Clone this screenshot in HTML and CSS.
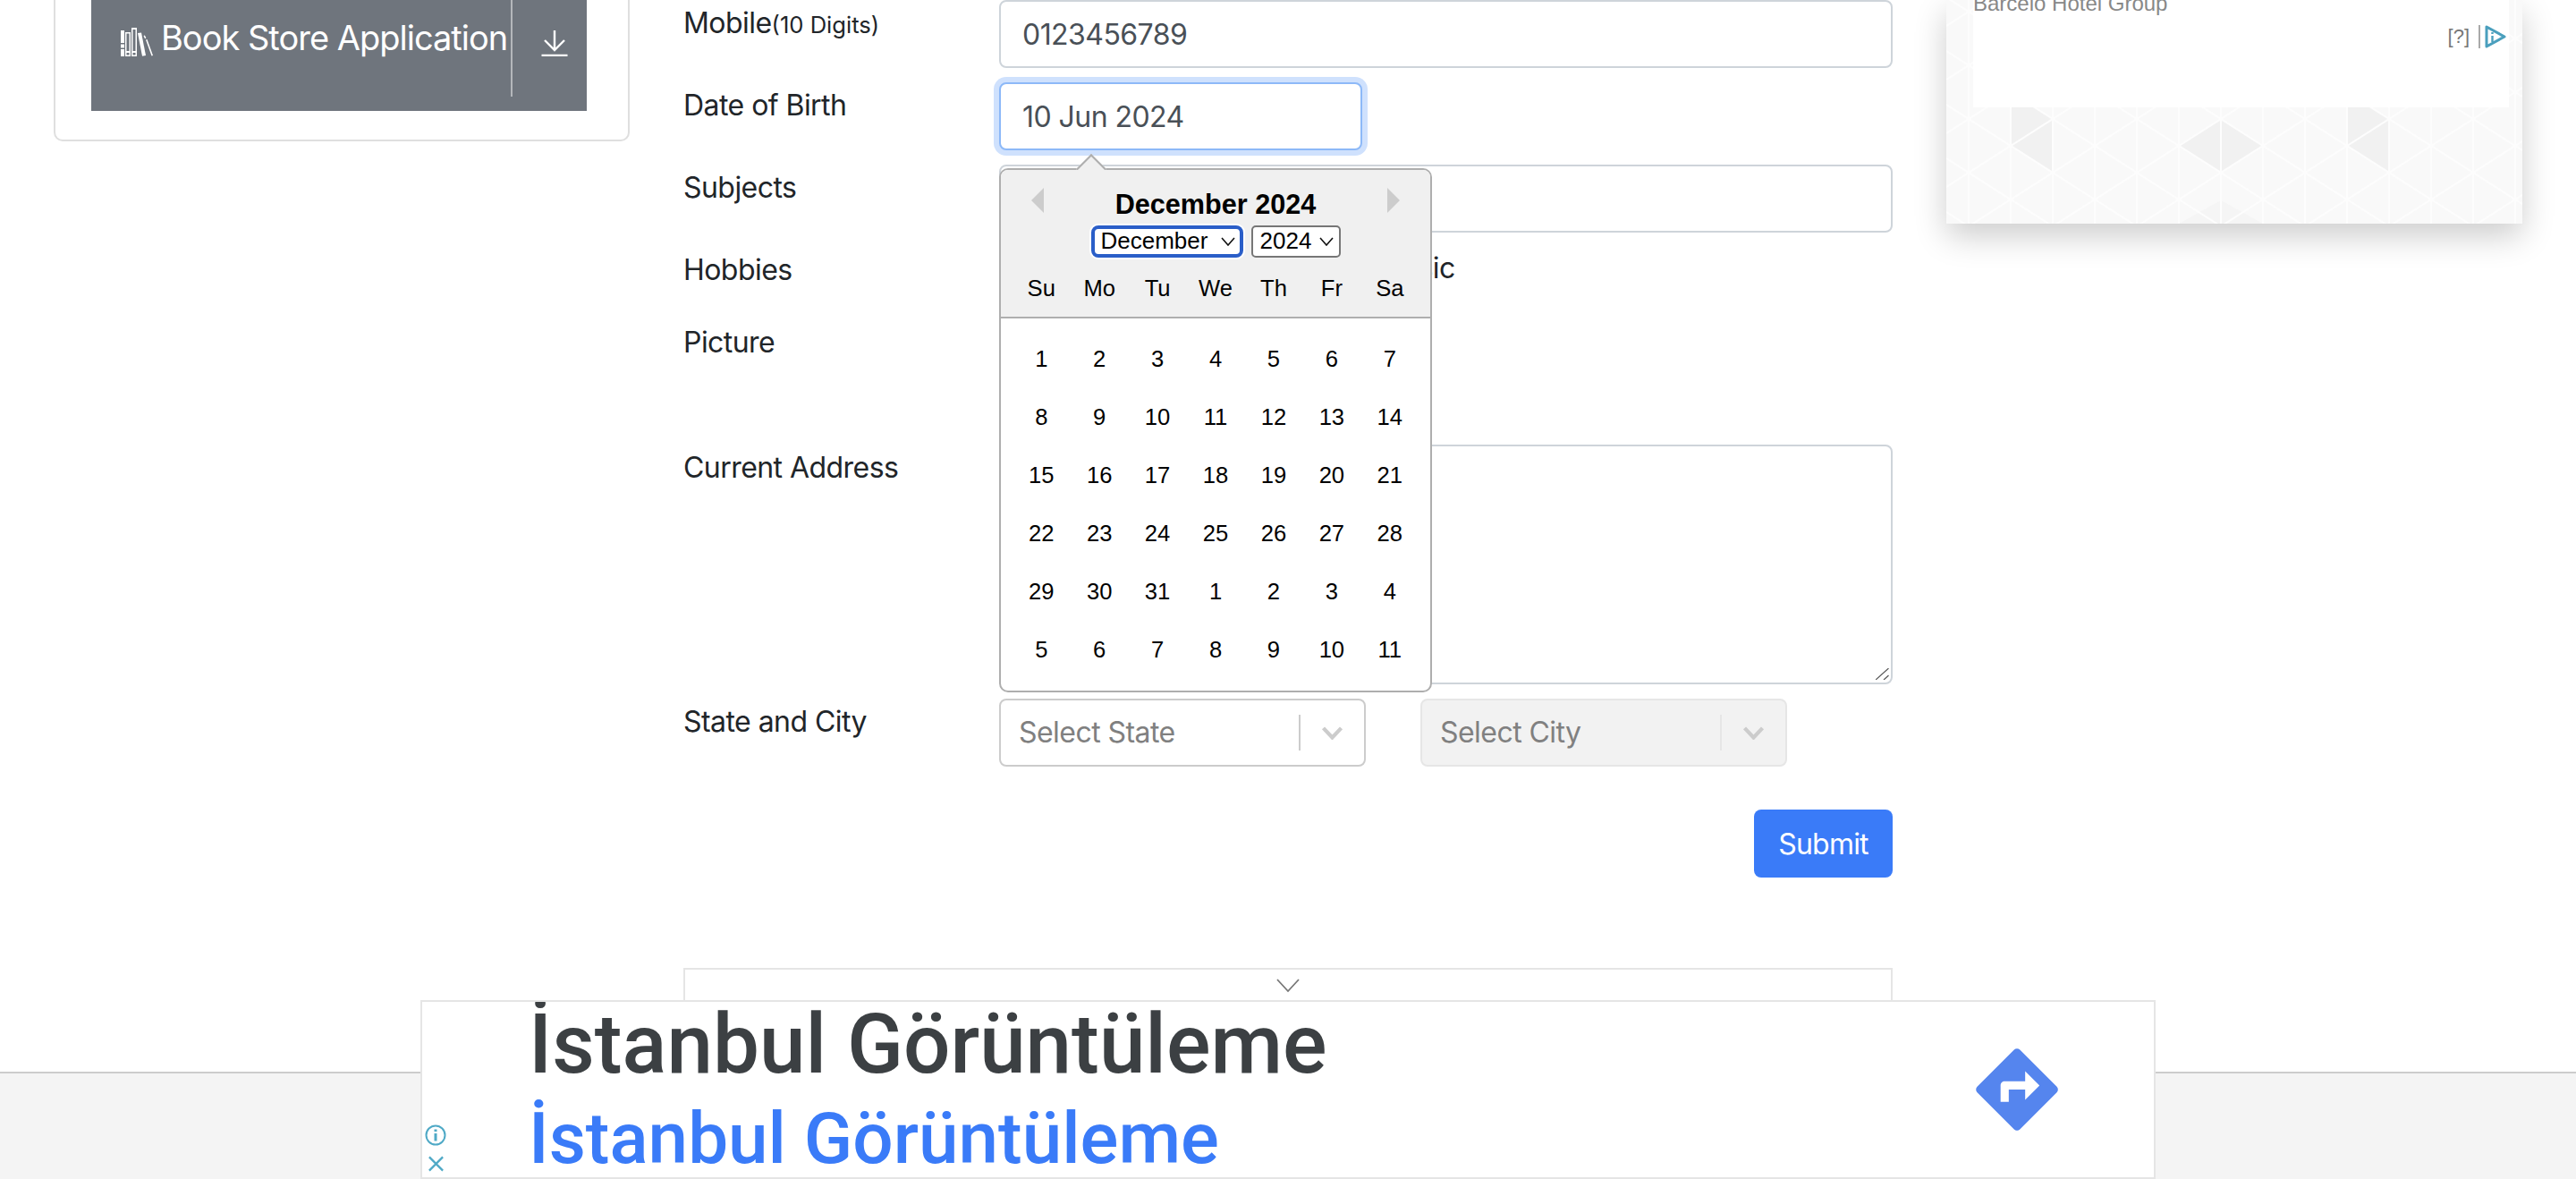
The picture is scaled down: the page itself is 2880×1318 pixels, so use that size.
FILE: index.html
```html
<!DOCTYPE html>
<html lang="en">
  <head>
    <title>Practice Form</title>

    <link rel="stylesheet" href="styles.css">
  </head>

  <body>
    <div class="page">
      <div class="left-col">
        <div class="left-card">
          <div class="app-item">
            <svg class="book-icon" viewBox="0 0 36 32" fill="#fff">
              <path d="M0 3h4v14H0zM0 18.500h4v4H0zM0 24h4v8H0z"/>
              <path d="M5 5h6v27H5zM6.500 6.500V26h3V6.500zM6.500 28v2.500h3V28z" fill-rule="evenodd"/>
              <path d="M12 0h6v32h-6zM13.500 2v24h3V2zM13.500 28v2.500h3V28z" fill-rule="evenodd"/>
              <path d="M19 6l4-.6 5 25.600-4 .8z"/>
              <path d="M25.500 9l1.400-.6 1.500 3.200-1.400.6zM28 13.500l1.500-.6 6.500 18-1.500.6z"/>
            </svg>
            <span class="app-name">Book Store Application</span>
            <div class="app-arrow">
              <svg viewBox="0 0 30 30" fill="none" stroke="#fff" stroke-width="2.400">
                <path d="M15 1v21M4 12l11 11 11-11M0.500 29h29"/>
              </svg>
            </div>
          </div>
        </div>
      </div>

      <form class="form">
        <div class="row">
          <label>Mobile<small>(10 Digits)</small></label>
          <input class="field" type="text" value="0123456789">
        </div>
        <div class="row">
          <label>Date of Birth</label>
          <div class="date-wrap">
            <input class="field field-focus" type="text" value="10 Jun 2024">
            <div class="picker">
              <div class="picker-tip"></div>
              <div class="picker-head">
                <span class="nav nav-prev"></span>
                <span class="nav nav-next"></span>
                <div class="picker-title">December 2024</div>
                <div class="picker-selects">
                  <span class="mini-select mini-month">December
                    <svg viewBox="0 0 16 10" fill="none" stroke="#111" stroke-width="1.600"><path d="M1 1l7 8 7-8"/></svg>
                  </span>
                  <span class="mini-select mini-year">2024
                    <svg viewBox="0 0 16 10" fill="none" stroke="#111" stroke-width="1.600"><path d="M1 1l7 8 7-8"/></svg>
                  </span>
                </div>
                <div class="week day-names">
                  <span>Su</span><span>Mo</span><span>Tu</span><span>We</span><span>Th</span><span>Fr</span><span>Sa</span>
                </div>
              </div>
              <div class="month">
                <div class="week"><span>1</span><span>2</span><span>3</span><span>4</span><span>5</span><span>6</span><span>7</span></div>
                <div class="week"><span>8</span><span>9</span><span>10</span><span>11</span><span>12</span><span>13</span><span>14</span></div>
                <div class="week"><span>15</span><span>16</span><span>17</span><span>18</span><span>19</span><span>20</span><span>21</span></div>
                <div class="week"><span>22</span><span>23</span><span>24</span><span>25</span><span>26</span><span>27</span><span>28</span></div>
                <div class="week"><span>29</span><span>30</span><span>31</span><span>1</span><span>2</span><span>3</span><span>4</span></div>
                <div class="week"><span>5</span><span>6</span><span>7</span><span>8</span><span>9</span><span>10</span><span>11</span></div>
              </div>
            </div>
          </div>
        </div>
        <div class="row">
          <label>Subjects</label>
          <input class="field" type="text">
        </div>
        <div class="row row-hobbies">
          <label>Hobbies</label>
          <div class="hobbies"><span>Sports</span><span>Reading</span><span>Music</span></div>
        </div>
        <div class="row row-picture">
          <label>Picture</label>
          <div></div>
        </div>
        <div class="row">
          <label>Current Address</label>
          <div class="address-wrap">
            <textarea class="field address"></textarea>
            <svg class="grip" viewBox="0 0 15 13" fill="none" stroke="#555" stroke-width="1.200"><path d="M0 13L14.500 0M9 13l5.500-5"/></svg>
          </div>
        </div>
        <div class="row row-state">
          <label>State and City</label>
          <div class="selects">
            <div class="select">
              <span class="select-text">Select State</span>
              <span class="select-sep"></span>
              <svg class="select-arrow" viewBox="0 0 20 12" fill="none" stroke="#ccc" stroke-width="3.400"><path d="M2 1.500l8 8.500 8-8.500"/></svg>
            </div>
            <div class="select select-off">
              <span class="select-text">Select City</span>
              <span class="select-sep"></span>
              <svg class="select-arrow" viewBox="0 0 20 12" fill="none" stroke="#ccc" stroke-width="3.400"><path d="M2 1.500l8 8.500 8-8.500"/></svg>
            </div>
          </div>
        </div>
        <div class="submit-row">
          <button class="submit" type="button">Submit</button>
        </div>
        <div class="accordion">
          <svg viewBox="0 0 26 16" fill="none" stroke="#777" stroke-width="1.800"><path d="M1 1l12 13L25 1"/></svg>
        </div>
      </form>

      <div class="side-ad">
        <svg class="side-pattern" width="644" height="250">
          <defs>
            <pattern id="tri" x="25" y="13" width="94" height="60" patternUnits="userSpaceOnUse">
              <path d="M0 0v60M47 0v60M94 0v60M0 0l47 30L94 0M0 60l47-30 47 30" fill="none" stroke="#fdfdfd" stroke-width="2"/>
            </pattern>
          </defs>
          <rect width="644" height="250" fill="#f9f9f9"/>
          <path d="M72 103l47 30-47 30zM72 163l47-30v60zM260 163l47-30v60zM307 133l47 30-47 30zM448 103l47 30-47 30zM448 163l47-30v60z" fill="#f1f1f1"/>
          <path d="M260 250l47-26 47 26z" fill="#f5f5f5"/>
          <rect width="644" height="250" fill="url(#tri)"/>
        </svg>
        <div class="side-inner">
          <div class="side-name">Barcelo Hotel Group</div>
          <div class="side-mark">
            <span>[?]</span>
            <i></i>
            <svg viewBox="0 0 24 26" fill="none" stroke="#4a9fbd" stroke-width="3" stroke-linejoin="round"><path d="M2 2v22l20-11z"/><path d="M8.500 8v2M8.500 12v7" stroke-width="2.400"/></svg>
          </div>
        </div>
      </div>
    </div>

    <footer class="footer"></footer>

    <div class="bottom-ad">
      <div class="bottom-text">
        <div class="bottom-title">İstanbul Görüntüleme</div>
        <div class="bottom-link">İstanbul Görüntüleme</div>
      </div>
      <svg class="bottom-go" viewBox="0 0 24 24" fill="#5585ee">
        <path d="M21.710 11.290l-9-9a.996.996 0 0 0-1.410 0l-9 9a.996.996 0 0 0 0 1.410l9 9c.39.39 1.020.39 1.410 0l9-9a.996.996 0 0 0 0-1.410zM14 14.500V12h-4v3H8v-4c0-.55.45-1 1-1h5V7.500l3.500 3.500-3.500 3.500z"/>
      </svg>
      <svg class="ad-info" viewBox="0 0 24 24" fill="none" stroke="#4fa9c6" stroke-width="2">
        <circle cx="12" cy="12" r="10.500"/>
        <path d="M12 10v8.500M12 5.500v2.500" stroke-width="3"/>
      </svg>
      <svg class="ad-close" viewBox="0 0 20 18" fill="none" stroke="#4fa9c6" stroke-width="2.400"><path d="M2 1l16 16M18 1L2 17"/></svg>
    </div>
  </body>
</html>
```

FILE: styles.css
```css
body {
  margin: 0;
  height: 1318px;
  overflow: hidden;
  background: white;
  color: #212529;
  font-family: Inter, "Liberation Sans", sans-serif;
  font-size: 32px;
  line-height: 48px;
  letter-spacing: -0.55px;
}
.page {
  display: flex;
  align-items: flex-start;
  height: 1198px;
}

/* left menu */
.left-col {
  width: 704px;
  flex-shrink: 0;
  padding-left: 60px;
  box-sizing: border-box;
}
.left-card {
  width: 644px;
  height: 158px;
  box-sizing: border-box;
  padding: 0 46px 32px 40px;
  border: 2px solid #dfdfdf;
  border-top: none;
  border-radius: 0 0 10px 10px;
}
.app-item {
  display: flex;
  height: 124px;
  background: #6f757d;
  color: white;
}
.book-icon {
  width: 36px;
  height: 32px;
  margin: 31px 9px 0 33px;
  flex-shrink: 0;
}
.app-name {
  font-size: 38px;
  letter-spacing: -1px;
  line-height: 44px;
  margin-top: 20px;
  white-space: nowrap;
  width: 391px;
  flex-shrink: 0;
}
.app-arrow {
  height: 108px;
  border-left: 2px solid #b4b7bb;
  padding-left: 32px;
}
.app-arrow svg {
  display: block;
  width: 30px;
  height: 30px;
  margin-top: 33px;
}

/* form */
.form {
  width: 1352px;
  flex-shrink: 0;
  margin-left: 60px;
}
.row {
  display: grid;
  grid-template-columns: 353px 999px;
  margin-bottom: 16px;
}
.row label {
  padding-top: 2px;
}
.row label small {
  font-size: 25.600px;
  letter-spacing: 0;
}
.field {
  display: block;
  box-sizing: border-box;
  width: 100%;
  height: 76px;
  padding: 0 24px;
  border: 2px solid #ced4da;
  border-radius: 8px;
  background: white;
  color: #495057;
  font: 32px Inter, "Liberation Sans", sans-serif;
  letter-spacing: -0.55px;
}
.date-wrap {
  position: relative;
  width: 406px;
}
.field-focus {
  border-color: #8db9f8;
  box-shadow: 0 0 0 6px #cfe1fd;
  outline: none;
}
.row-hobbies {
  height: 65px;
}
.hobbies {
  display: flex;
  gap: 40px;
  padding-left: 127px;
}
.row-picture {
  height: 124px;
}
.address-wrap {
  position: relative;
}
.address {
  height: 268px;
  resize: none;
}
.grip {
  position: absolute;
  right: 4px;
  bottom: 5px;
  width: 15px;
  height: 13px;
}
.row-state {
  margin-bottom: 48px;
}
.selects {
  display: flex;
  gap: 61px;
}
.select {
  display: flex;
  align-items: center;
  box-sizing: border-box;
  width: 410px;
  height: 76px;
  padding-left: 20px;
  border: 2px solid #ccc;
  border-radius: 8px;
  color: #808080;
}
.select-off {
  background: #f2f2f2;
  border-color: #e6e6e6;
}
.select-text {
  width: 313px;
}
.select-sep {
  width: 2px;
  height: 40px;
  background: #ccc;
}
.select-off .select-sep {
  background: #e6e6e6;
}
.select-arrow {
  width: 25px;
  height: 15px;
  margin-left: 23px;
}
.submit-row {
  display: flex;
  justify-content: flex-end;
}
.submit {
  width: 155px;
  height: 76px;
  border: none;
  border-radius: 8px;
  background: #3a7bf8;
  color: white;
  font: 32px Inter, "Liberation Sans", sans-serif;
  letter-spacing: -0.8px;
}
.accordion {
  display: flex;
  justify-content: center;
  height: 120px;
  margin-top: 101px;
  border: 2px solid #e5e5e5;
  box-sizing: border-box;
  padding-top: 10px;
}
.accordion svg {
  width: 26px;
  height: 16px;
}

/* date picker */
.picker {
  position: absolute;
  top: 96px;
  left: 0;
  z-index: 5;
  box-sizing: border-box;
  width: 484px;
  height: 586px;
  border: 2px solid #aeaeae;
  border-radius: 10px;
  background: white;
  color: black;
  font-family: "Liberation Sans", Arial, sans-serif;
  font-size: 25.600px;
  line-height: 1.2;
  letter-spacing: 0;
}
.picker-tip {
  position: absolute;
  top: -13px;
  left: 89px;
  width: 24px;
  height: 24px;
  background: #f0f0f0;
  border: 2px solid #aeaeae;
  border-right: none;
  border-bottom: none;
  transform: rotate(45deg);
  box-sizing: border-box;
}
.picker-head {
  position: relative;
  height: 166px;
  box-sizing: border-box;
  padding-top: 20px;
  background: #f0f0f0;
  border-bottom: 2px solid #aeaeae;
  border-radius: 8px 8px 0 0;
  text-align: center;
}
.nav {
  position: absolute;
  top: 20px;
  width: 0;
  height: 0;
  border-top: 14px solid transparent;
  border-bottom: 14px solid transparent;
}
.nav-prev {
  left: 34px;
  border-right: 14px solid #ccc;
}
.nav-next {
  right: 34px;
  border-left: 14px solid #ccc;
}
.picker-title {
  font-size: 30.600px;
  font-weight: bold;
  line-height: 36px;
}
.picker-selects {
  display: flex;
  justify-content: center;
  gap: 9px;
  margin-top: 6px;
}
.mini-select {
  display: flex;
  align-items: center;
  justify-content: space-between;
  box-sizing: border-box;
  height: 36px;
  padding: 0 6px 0 8px;
  background: white;
  border: 2px solid #767676;
  border-radius: 5px;
  font-size: 26px;
}
.mini-select svg {
  width: 16px;
  height: 10px;
}
.mini-month {
  width: 170px;
  border: 4px solid #2a5ec8;
  border-radius: 8px;
  padding: 0 5px 0 7px;
  box-shadow: 0 0 0 2px white;
}
.mini-year {
  width: 100px;
}
.week {
  display: flex;
  padding: 0 12.800px;
}
.week span {
  width: 54.400px;
  margin: 0 5.300px;
  line-height: 54.400px;
  text-align: center;
  white-space: nowrap;
}
.day-names {
  margin-top: 11px;
}
.day-names span {
  line-height: 46px;
}
.month {
  padding: 12.800px 0;
}
.month .week span {
  margin-top: 5.300px;
  margin-bottom: 5.300px;
}

/* side advert */
.side-ad {
  position: relative;
  width: 644px;
  height: 250px;
  margin-left: 60px;
  flex-shrink: 0;
  box-shadow: 0 14px 34px rgba(0, 0, 0, 0.2);
  font-family: "Liberation Sans", Arial, sans-serif;
  letter-spacing: 0;
}
.side-pattern {
  position: absolute;
  top: 0;
  left: 0;
}
.side-inner {
  position: absolute;
  top: 0;
  left: 30px;
  width: 599px;
  height: 120px;
  background: white;
}
.side-name {
  margin-top: -10px;
  font-size: 24px;
  line-height: 28px;
  color: #888;
}
.side-mark {
  display: flex;
  align-items: center;
  justify-content: flex-end;
  margin-top: 10px;
  padding-right: 3px;
  font-size: 22px;
  line-height: 26px;
  color: #777;
}
.side-mark i {
  width: 2px;
  height: 26px;
  margin: 0 5px 0 10px;
  background: #aaa;
}
.side-mark svg {
  width: 24px;
  height: 26px;
}

/* footer and bottom advert */
.footer {
  height: 120px;
  box-sizing: border-box;
  border-top: 2px solid #ccc;
  background: #f4f4f4;
}
.bottom-ad {
  position: fixed;
  left: 470px;
  bottom: 0;
  z-index: 10;
  display: flex;
  justify-content: space-between;
  box-sizing: border-box;
  width: 1940px;
  height: 200px;
  border: 2px solid #e5e5e5;
  background: white;
  overflow: hidden;
  letter-spacing: 0;
}
.bottom-text {
  padding-left: 119px;
  font-family: Roboto, sans-serif;
  font-weight: 500;
  white-space: nowrap;
}
.bottom-title {
  margin-top: -2px;
  font-size: 92.500px;
  line-height: 100px;
  color: #3c4043;
}
.bottom-link {
  margin-top: 5px;
  font-size: 80px;
  line-height: 100px;
  color: #3a7bf8;
}
.bottom-go {
  width: 110px;
  height: 110px;
  margin: 43px 98px 0 0;
}
.ad-info {
  position: absolute;
  left: 3px;
  bottom: 35px;
  width: 24px;
  height: 24px;
}
.ad-close {
  position: absolute;
  left: 6px;
  bottom: 6px;
  width: 19px;
  height: 18px;
}
```
